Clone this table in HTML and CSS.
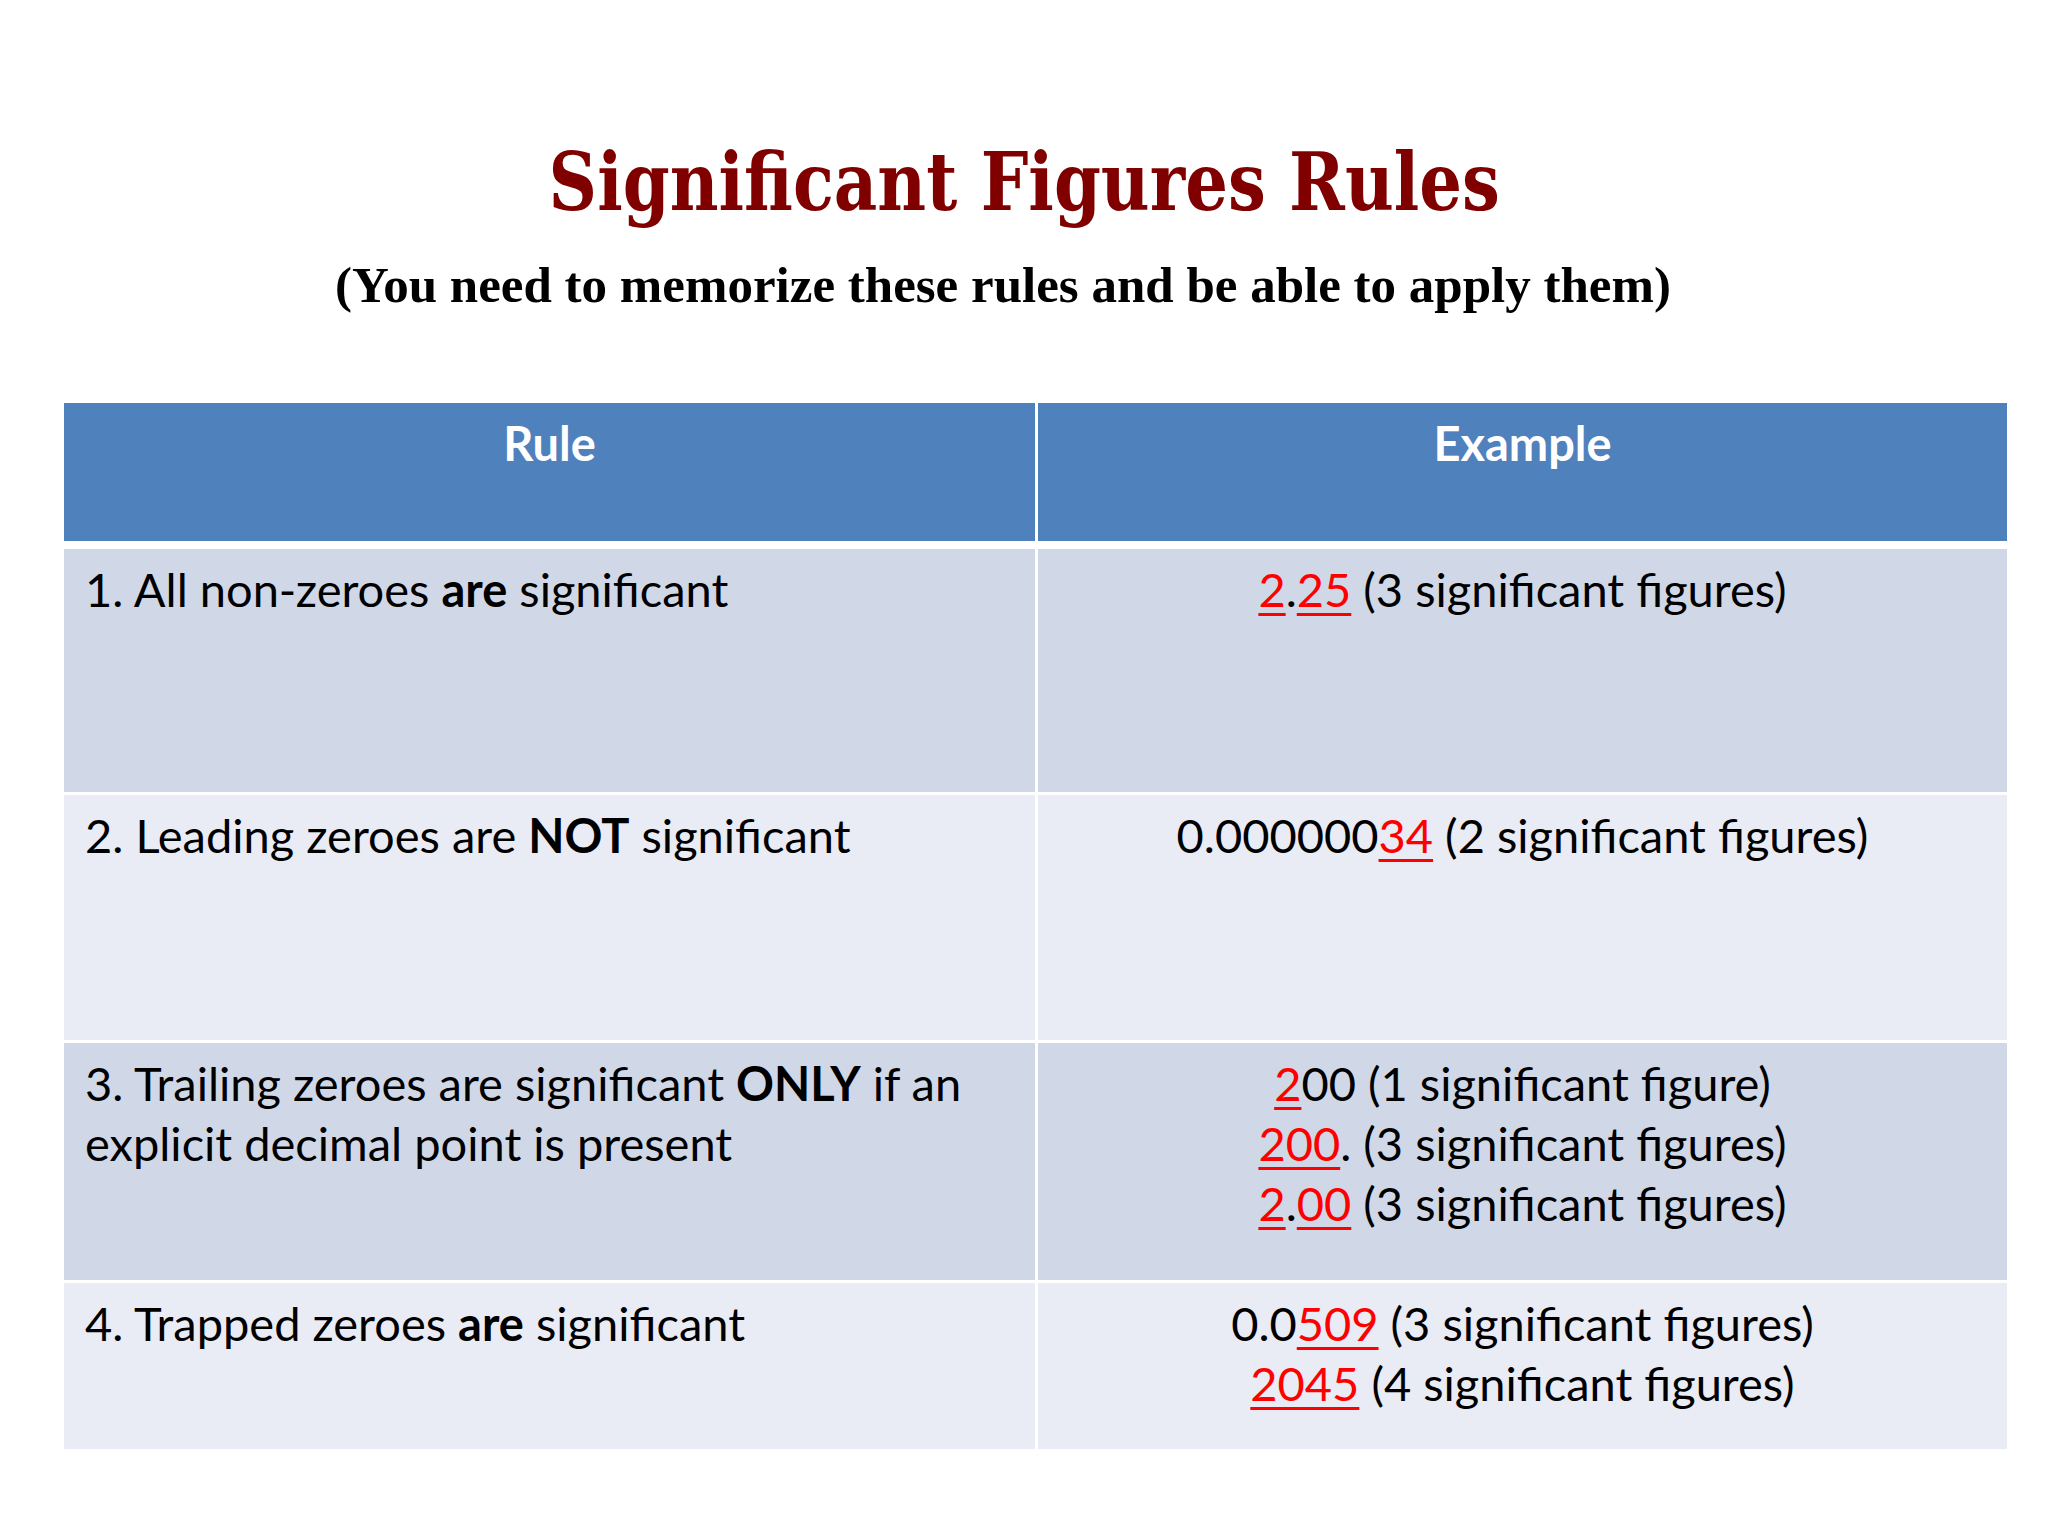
FILE: index.html
```html
<!DOCTYPE html>
<html lang="en">
<head>
<meta charset="utf-8">
<title>Significant Figures Rules</title>
<link rel="stylesheet" href="styles.css">
</head>
<body>
<main class="slide">
  <h1 class="title"><span class="title-text">Significant Figures Rules</span></h1>
  <p class="subtitle">(You need to memorize these rules and be able to apply them)</p>
  <div class="rules" role="table">
    <div class="row head" role="row">
      <div class="cell hcell" role="columnheader">Rule</div>
      <div class="cell hcell" role="columnheader">Example</div>
    </div>
    <div class="row r1 odd" role="row">
      <div class="cell" role="cell">1. All non-zeroes <b>are</b> significant</div>
      <div class="cell ex" role="cell"><u class="sig">2</u>.<u class="sig">25</u> (3 significant figures)</div>
    </div>
    <div class="row r2 even" role="row">
      <div class="cell" role="cell">2. Leading zeroes are <b>NOT</b> significant</div>
      <div class="cell ex" role="cell">0.000000<u class="sig">34</u> (2 significant figures)</div>
    </div>
    <div class="row r3 odd" role="row">
      <div class="cell" role="cell">3. Trailing zeroes are significant <b>ONLY</b> if an explicit decimal point is present</div>
      <div class="cell ex" role="cell"><u class="sig">2</u>00 (1 significant figure)<br><u class="sig">200</u>. (3 significant figures)<br><u class="sig">2</u>.<u class="sig">00</u> (3 significant figures)</div>
    </div>
    <div class="row r4 even" role="row">
      <div class="cell" role="cell">4. Trapped zeroes <b>are</b> significant</div>
      <div class="cell ex" role="cell">0.0<u class="sig">509</u> (3 significant figures)<br><u class="sig">2045</u> (4 significant figures)</div>
    </div>
  </div>
</main>
</body>
</html>
```

FILE: styles.css
```css
html, body {
  margin: 0;
  padding: 0;
  background: #ffffff;
}

.slide {
  width: 2048px;
  height: 1536px;
  box-sizing: border-box;
  padding-top: 132px;
  background: #ffffff;
}

.title {
  margin: 0;
  text-align: center;
  font-family: "DejaVu Serif", serif;
  font-weight: bold;
  font-size: 80px;
  line-height: 100px;
  color: #800000;
}

.title-text {
  display: inline-block;
  transform: scaleX(0.84);
  transform-origin: center;
}

.subtitle {
  margin: 23px 0 0 0;
  padding-right: 42px;
  text-align: center;
  font-family: "Liberation Serif", "Times New Roman", serif;
  font-weight: bold;
  font-size: 51px;
  line-height: 60px;
  color: #000000;
}

.rules {
  margin: 88px 0 0 64px;
  width: 1943px;
  display: flex;
  flex-direction: column;
  gap: 3px;
  font-family: Lato, "Liberation Sans", sans-serif;
  font-size: 47px;
  line-height: 60px;
  color: #000000;
}

.row {
  display: grid;
  grid-template-columns: 971px 969px;
  column-gap: 3px;
}

.cell {
  padding: 10px 21px 0 21px;
  box-sizing: border-box;
  text-align: left;
}

.cell.ex { text-align: center; }

.head { height: 138px; margin-bottom: 5px; }
.hcell {
  background: #4f81bd;
  color: #ffffff;
  font-weight: bold;
  text-align: center;
}

.odd .cell { background: #d0d8e8; }
.even .cell { background: #e9ebf5; }

.r1 { height: 243px; }
.r2 { height: 245px; }
.r3 { height: 237px; }
.r4 { height: 166px; }

.cell b { font-weight: bold; }

.sig {
  color: #ff0000;
  text-decoration: underline;
  text-decoration-color: #ff0000;
  text-decoration-thickness: 3px;
  text-underline-offset: 6px;
}
```
